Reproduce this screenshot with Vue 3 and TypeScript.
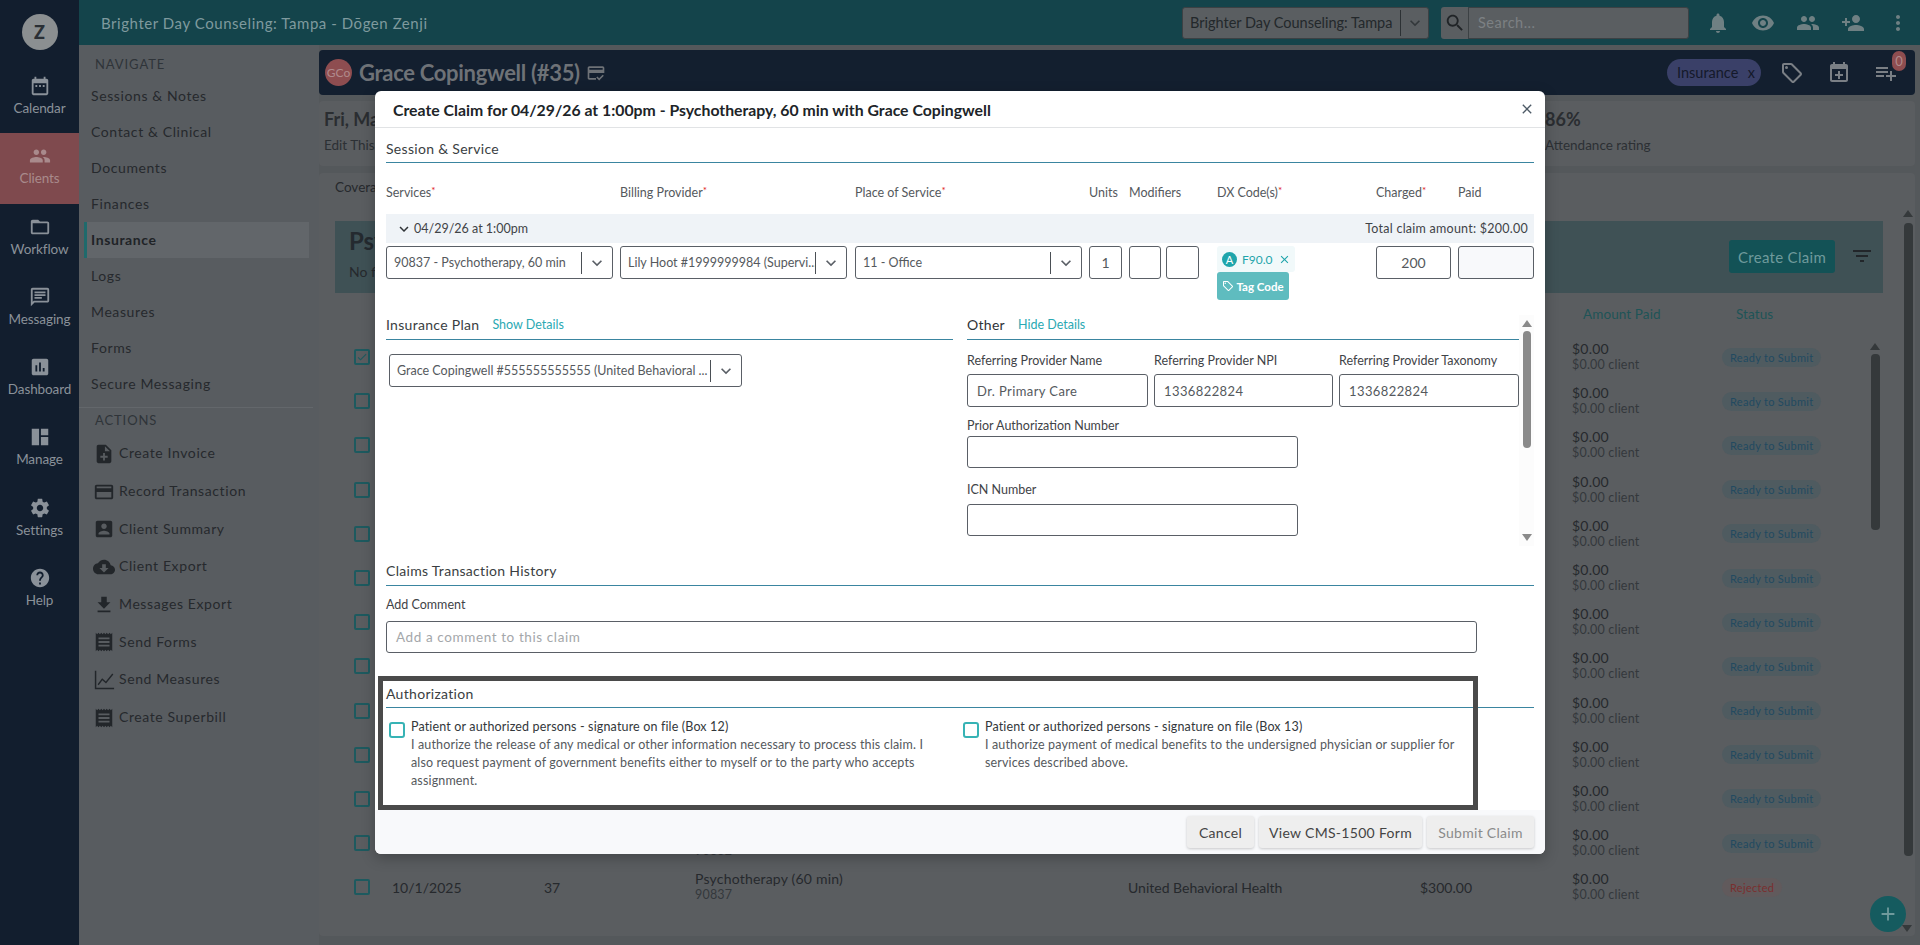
<script setup lang="ts">
const P = {
  calendar: 'M9 11H7v2h2v-2zm4 0h-2v2h2v-2zm4 0h-2v2h2v-2zm2-7h-1V2h-2v2H8V2H6v2H5c-1.11 0-1.99.9-1.99 2L3 20c0 1.1.89 2 2 2h14c1.1 0 2-.9 2-2V6c0-1.1-.9-2-2-2zm0 16H5V9h14v11z',
  people: 'M16 11c1.66 0 2.99-1.34 2.99-3S17.66 5 16 5c-1.66 0-3 1.34-3 3s1.34 3 3 3zm-8 0c1.66 0 2.99-1.34 2.99-3S9.66 5 8 5C6.34 5 5 6.34 5 8s1.34 3 3 3zm0 2c-2.33 0-7 1.17-7 3.5V19h14v-2.5c0-2.33-4.67-3.5-7-3.5zm8 0c-.29 0-.62.02-.97.05 1.16.84 1.97 1.97 1.97 3.45V19h6v-2.5c0-2.33-4.67-3.5-7-3.5z',
  folder: 'M20 6h-8l-2-2H4c-1.1 0-1.99.9-1.99 2L2 18c0 1.1.9 2 2 2h16c1.1 0 2-.9 2-2V8c0-1.1-.9-2-2-2zm0 12H4V8h16v10z',
  chat: 'M20 2H4c-1.1 0-1.99.9-1.99 2L2 22l4-4h14c1.1 0 2-.9 2-2V4c0-1.1-.9-2-2-2zm0 14H5.17L4 17.17V4h16v12zM6 12h8v2H6zm0-3h12v2H6zm0-3h12v2H6z',
  chart: 'M19 3H5c-1.1 0-2 .9-2 2v14c0 1.1.9 2 2 2h14c1.1 0 2-.9 2-2V5c0-1.1-.9-2-2-2zM9 17H7v-7h2v7zm4 0h-2V7h2v10zm4 0h-2v-4h2v4z',
  manage: 'M3 3h8v18H3zM13 3h8v7h-8zM13 12h8v9h-8z',
  gear: 'M19.43 12.98c.04-.32.07-.64.07-.98s-.03-.66-.07-.98l2.11-1.65c.19-.15.24-.42.12-.64l-2-3.46c-.12-.22-.39-.3-.61-.22l-2.49 1c-.52-.4-1.08-.73-1.69-.98l-.38-2.65C14.46 2.18 14.25 2 14 2h-4c-.25 0-.46.18-.49.42l-.38 2.65c-.61.25-1.17.59-1.69.98l-2.49-1c-.23-.09-.49 0-.61.22l-2 3.46c-.13.22-.07.49.12.64l2.11 1.65c-.04.32-.07.65-.07.98s.03.66.07.98l-2.11 1.65c-.19.15-.24.42-.12.64l2 3.46c.12.22.39.3.61.22l2.49-1c.52.4 1.08.73 1.69.98l.38 2.65c.03.24.24.42.49.42h4c.25 0 .46-.18.49-.42l.38-2.65c.61-.25 1.17-.59 1.69-.98l2.49 1c.23.09.49 0 .61-.22l2-3.46c.12-.22.07-.49-.12-.64l-2.11-1.65zM12 15.5c-1.93 0-3.5-1.57-3.5-3.5s1.57-3.5 3.5-3.5 3.5 1.57 3.5 3.5-1.57 3.5-3.5 3.5z',
  help: 'M12 2C6.48 2 2 6.48 2 12s4.48 10 10 10 10-4.48 10-10S17.52 2 12 2zm1 17h-2v-2h2v2zm2.07-7.75l-.9.92C13.45 12.9 13 13.5 13 15h-2v-.5c0-1.1.45-2.1 1.17-2.83l1.24-1.26c.37-.36.59-.86.59-1.41 0-1.1-.9-2-2-2s-2 .9-2 2H8c0-2.21 1.79-4 4-4s4 1.79 4 4c0 .88-.36 1.68-.93 2.25z',
  noteAdd: 'M14 2H6c-1.1 0-1.99.9-1.99 2L4 20c0 1.1.89 2 1.99 2H18c1.1 0 2-.9 2-2V8l-6-6zm2 14h-3v3h-2v-3H8v-2h3v-3h2v3h3v2zm-3-7V3.5L18.5 9H13z',
  card: 'M20 4H4c-1.11 0-1.99.89-1.99 2L2 18c0 1.11.89 2 2 2h16c1.11 0 2-.89 2-2V6c0-1.11-.89-2-2-2zm0 14H4v-6h16v6zm0-10H4V6h16v2z',
  accountBox: 'M3 5v14c0 1.1.89 2 2 2h14c1.1 0 2-.9 2-2V5c0-1.1-.9-2-2-2H5c-1.11 0-2 .9-2 2zm12 4c0 1.66-1.34 3-3 3s-3-1.34-3-3 1.34-3 3-3 3 1.34 3 3zm-9 8c0-2 4-3.1 6-3.1s6 1.1 6 3.1v1H6v-1z',
  cloud: 'M19.35 10.04C18.67 6.59 15.64 4 12 4 9.11 4 6.6 5.64 5.35 8.04 2.34 8.36 0 10.91 0 14c0 3.31 2.69 6 6 6h13c2.76 0 5-2.24 5-5 0-2.64-2.05-4.78-4.65-4.96zM17 13l-5 5-5-5h3V9h4v4h3z',
  getApp: 'M19 9h-4V3H9v6H5l7 7 7-7zM5 18v2h14v-2H5z',
  receipt: 'M18 17H6v-2h12v2zm0-4H6v-2h12v2zm0-4H6V7h12v2zM3 22l1.5-1.5L6 22l1.5-1.5L9 22l1.5-1.5L12 22l1.5-1.5L15 22l1.5-1.5L18 22l1.5-1.5L21 22V2l-1.5 1.5L18 2l-1.5 1.5L15 2l-1.5 1.5L12 2l-1.5 1.5L9 2 7.5 3.5 6 2 4.5 3.5 3 2v20z',
  measures: 'M2 2h1.6v18.4H23V22H2zM5 16.6l5-6.4 4 3.4 7-8.6 1.2 1-8 9.8-4-3.4-4 5.2z',
  bell: 'M12 22c1.1 0 2-.9 2-2h-4c0 1.1.89 2 2 2zm6-6v-5c0-3.07-1.64-5.64-4.5-6.32V4c0-.83-.67-1.5-1.5-1.5s-1.5.67-1.5 1.5v.68C7.63 5.36 6 7.92 6 11v5l-2 2v1h16v-1l-2-2z',
  eye: 'M12 4.5C7 4.5 2.73 7.61 1 12c1.73 4.39 6 7.5 11 7.5s9.27-3.11 11-7.5c-1.73-4.39-6-7.5-11-7.5zM12 17c-2.76 0-5-2.24-5-5s2.24-5 5-5 5 2.24 5 5-2.24 5-5 5zm0-8c-1.66 0-3 1.34-3 3s1.34 3 3 3 3-1.34 3-3-1.34-3-3-3z',
  personAdd: 'M15 12c2.21 0 4-1.79 4-4s-1.79-4-4-4-4 1.79-4 4 1.79 4 4 4zm-9-2V7H4v3H1v2h3v3h2v-3h3v-2H6zm9 4c-2.67 0-8 1.34-8 4v2h16v-2c0-2.66-5.33-4-8-4z',
  dots: 'M12 8c1.1 0 2-.9 2-2s-.9-2-2-2-2 .9-2 2 .9 2 2 2zm0 2c-1.1 0-2 .9-2 2s.9 2 2 2 2-.9 2-2-.9-2-2-2zm0 6c-1.1 0-2 .9-2 2s.9 2 2 2 2-.9 2-2-.9-2-2-2z',
  search: 'M15.5 14h-.79l-.28-.27C15.41 12.59 16 11.11 16 9.5 16 5.91 13.09 3 9.5 3S3 5.91 3 9.5 5.91 16 9.5 16c1.61 0 3.09-.59 4.23-1.57l.27.28v.79l5 4.99L20.49 19l-4.99-5zm-6 0C7.01 14 5 11.99 5 9.5S7.01 5 9.5 5 14 7.01 14 9.5 11.99 14 9.5 14z',
  calPlus: 'M19 3h-1V1h-2v2H8V1H6v2H5c-1.11 0-1.99.9-1.99 2L3 19c0 1.1.89 2 2 2h14c1.1 0 2-.9 2-2V5c0-1.1-.9-2-2-2zm0 16H5V8h14v11zm-8-9h2v3h3v2h-3v3h-2v-3H8v-2h3v-3z',
  playlist: 'M14 10H2v2h12v-2zm0-4H2v2h12V6zm4 8v-4h-2v4h-4v2h4v4h2v-4h4v-2h-4zM2 16h8v-2H2v2z',
  filter: 'M10 18h4v-2h-4v2zM3 6v2h18V6H3zm3 7h12v-2H6v2z',
  plus: 'M19 13h-6v6h-2v-6H5v-2h6V5h2v6h6v2z',
  close: 'M19 6.41L17.59 5 12 10.59 6.41 5 5 6.41 10.59 12 5 17.59 6.41 19 12 13.41 17.59 19 19 17.59 13.41 12z',
  chevron: 'M7.41 8.59L12 13.17l4.59-4.58L18 10l-6 6-6-6z',
  check: 'M9 16.2L4.8 12l-1.4 1.4L9 19 21 7l-1.4-1.4z',
  tag: 'M21.41 11.58l-9-9C12.05 2.22 11.55 2 11 2H4c-1.1 0-2 .9-2 2v7c0 .55.22 1.05.59 1.42l9 9c.36.36.86.58 1.41.58s1.05-.22 1.41-.59l7-7c.37-.36.59-.86.59-1.41s-.23-1.06-.59-1.42zM13 20l-9-9V4h7l9 9-7 7zM6.5 5A1.5 1.5 0 1 0 6.5 8 1.5 1.5 0 0 0 6.5 5z',
  cardCheck: 'M20 4H4c-1.1 0-2 .9-2 2v12c0 1.1.9 2 2 2h8v-2H4v-6h18V6c0-1.1-.9-2-2-2zm0 4H4V6h16v2zm-4.2 13l-3.5-3.5 1.4-1.4 2.1 2.1 4.2-4.2 1.4 1.4z'
}

const rail = [
  { label: 'Calendar', icon: P.calendar },
  { label: 'Clients', icon: P.people, active: true },
  { label: 'Workflow', icon: P.folder },
  { label: 'Messaging', icon: P.chat },
  { label: 'Dashboard', icon: P.chart },
  { label: 'Manage', icon: P.manage },
  { label: 'Settings', icon: P.gear },
  { label: 'Help', icon: P.help }
]
const navItems = ['Sessions & Notes', 'Contact & Clinical', 'Documents', 'Finances', 'Insurance', 'Logs', 'Measures', 'Forms', 'Secure Messaging']
const actions = [
  { label: 'Create Invoice', icon: P.noteAdd },
  { label: 'Record Transaction', icon: P.card },
  { label: 'Client Summary', icon: P.accountBox },
  { label: 'Client Export', icon: P.cloud },
  { label: 'Messages Export', icon: P.getApp },
  { label: 'Send Forms', icon: P.receipt },
  { label: 'Send Measures', icon: P.measures },
  { label: 'Create Superbill', icon: P.receipt }
]
const topIcons = [P.bell, P.eye, P.people, P.personAdd, P.dots]
const rows = Array.from({ length: 13 }, (_, i) => ({
  checked: i === 0,
  full: i === 12,
  peek: i >= 11,
  date: '10/1/2025',
  id: '37',
  service: i === 11 ? 'Psychotherapy (45 min)' : 'Psychotherapy (60 min)',
  code: i === 11 ? '90832' : '90837',
  charged: '$300.00',
  rejected: i === 12
}))
const selects = ['90837 - Psychotherapy, 60 min', 'Lily Hoot #1999999984 (Supervi...', '11 - Office']
</script>

<template>
  <div class="app">
    <aside class="rail">
      <div class="rail-top"><span class="avatar">Z</span></div>
      <a v-for="r in rail" :key="r.label" class="rail-item" :class="{ active: r.active }">
        <svg viewBox="0 0 24 24" class="rail-icon"><path :d="r.icon" /></svg>
        <span>{{ r.label }}</span>
      </a>
    </aside>

    <div class="main">
      <header class="topbar">
        <div class="brand">Brighter Day Counseling: Tampa - Dōgen Zenji</div>
        <div class="loc">
          <span class="loc-text">Brighter Day Counseling: Tampa</span>
          <i class="loc-sep"></i>
          <svg viewBox="0 0 24 24" class="loc-chev"><path :d="P.chevron" /></svg>
        </div>
        <div class="search-btn"><svg viewBox="0 0 24 24"><path :d="P.search" /></svg></div>
        <div class="search-input">Search...</div>
        <div class="top-icons">
          <svg v-for="(ic, i) in topIcons" :key="i" viewBox="0 0 24 24"><path :d="ic" /></svg>
        </div>
      </header>

      <div class="below">
        <nav class="side">
          <div class="side-title">NAVIGATE</div>
          <a v-for="n in navItems" :key="n" class="side-link" :class="{ on: n === 'Insurance' }">{{ n }}</a>
          <div class="side-title actions-title">ACTIONS</div>
          <a v-for="a in actions" :key="a.label" class="side-action">
            <svg viewBox="0 0 24 24"><path :d="a.icon" /></svg>
            <span>{{ a.label }}</span>
          </a>
        </nav>

        <section class="content">
          <div class="patient">
            <span class="p-avatar">GCo</span>
            <span class="p-name">Grace Copingwell (#35)</span>
            <svg viewBox="0 0 24 24" class="p-card"><path :d="P.cardCheck" /></svg>
            <span class="grow"></span>
            <span class="pill">Insurance <b>x</b></span>
            <svg viewBox="0 0 24 24" class="p-ic"><path :d="P.tag" /></svg>
            <svg viewBox="0 0 24 24" class="p-ic"><path :d="P.calPlus" /></svg>
            <span class="p-last">
              <svg viewBox="0 0 24 24" class="p-ic"><path :d="P.playlist" /></svg>
              <em class="badge">0</em>
            </span>
          </div>

          <div class="info">
            <div class="info-col">
              <strong>Fri, Mar 6</strong>
              <span>Edit This Session</span>
            </div>
            <div class="info-col right">
              <strong>86%</strong>
              <span>Attendance rating</span>
            </div>
          </div>

          <div class="panel">
            <div class="tabs">Coverage</div>
            <div class="banner">
              <div>
                <div class="banner-title">Psychotherapy</div>
                <div class="banner-sub">No filters applied</div>
              </div>
              <span class="grow"></span>
              <span class="cc">Create Claim</span>
              <svg viewBox="0 0 24 24" class="filter"><path :d="P.filter" /></svg>
            </div>
            <div class="thead">
              <span class="th-paid">Amount Paid</span>
              <span class="th-status">Status</span>
            </div>
            <div class="tbody">
              <div v-for="(r, i) in rows" :key="i" class="row">
                <span class="cb"><svg v-if="r.checked" viewBox="0 0 24 24"><path :d="P.check" /></svg></span>
                <span>{{ r.full ? r.date : '' }}</span>
                <span>{{ r.full ? r.id : '' }}</span>
                <span class="two"><template v-if="r.peek"><span>{{ r.service }}</span><small>{{ r.code }}</small></template></span>
                <span>{{ r.full ? 'United Behavioral Health' : '' }}</span>
                <span>{{ r.full ? r.charged : '' }}</span>
                <span class="two"><span>$0.00</span><small>$0.00 client</small></span>
                <span><em class="status" :class="{ rej: r.rejected }">{{ r.rejected ? 'Rejected' : 'Ready to Submit' }}</em></span>
              </div>
            </div>
            <div class="inner-bar">
              <i class="up dim"></i>
              <i class="thumb"></i>
            </div>
            <div class="outer-bar">
              <i class="up dim"></i>
              <i class="thumb"></i>
            </div>
            <div class="fab"><svg viewBox="0 0 24 24"><path :d="P.plus" /></svg></div>
            <i class="fab-arrow"></i>
          </div>
        </section>
      </div>
    </div>

    <div class="modal">
      <div class="m-head">
        <h2>Create Claim for 04/29/26 at 1:00pm - Psychotherapy, 60 min with Grace Copingwell</h2>
        <svg viewBox="0 0 24 24"><path :d="P.close" /></svg>
      </div>

      <div class="m-body">
        <div class="sec sec-session">Session &amp; Service</div>
        <div class="grid labels">
          <label>Services<sup>*</sup></label>
          <label>Billing Provider<sup>*</sup></label>
          <label>Place of Service<sup>*</sup></label>
          <label>Units</label>
          <label class="span2">Modifiers</label>
          <label>DX Code(s)<sup>*</sup></label>
          <label>Charged<sup>*</sup></label>
          <label>Paid</label>
        </div>
        <div class="dateline">
          <svg viewBox="0 0 24 24"><path :d="P.chevron" /></svg>
          <span>04/29/26 at 1:00pm</span>
          <span class="grow"></span>
          <span class="total">Total claim amount: $200.00</span>
        </div>
        <div class="grid inputs">
          <div v-for="s in selects" :key="s" class="sel sel-w">
            <span class="sel-val">{{ s }}</span><i></i>
            <svg viewBox="0 0 24 24"><path :d="P.chevron" /></svg>
          </div>
          <div class="box w33 center">1</div>
          <div class="box w32"></div>
          <div class="box w33"></div>
          <div class="dx">
            <div class="chip"><b>A</b><span>F90.0</span><svg viewBox="0 0 24 24"><path :d="P.close" /></svg></div>
            <div class="tagcode"><svg viewBox="0 0 24 24"><path :d="P.tag" /></svg>Tag Code</div>
          </div>
          <div class="box w75 center">200</div>
          <div class="box w76 tint"></div>
        </div>

        <div class="split">
          <div class="col-left">
            <div class="sec sec-small"><span>Insurance Plan</span><a>Show Details</a></div>
            <div class="sel plan">
              <span class="sel-val">Grace Copingwell #555555555555 (United Behavioral ...</span><i></i>
              <svg viewBox="0 0 24 24"><path :d="P.chevron" /></svg>
            </div>
          </div>
          <div class="col-right">
            <div class="other">
              <div class="sec sec-small"><span class="dark">Other</span><a>Hide Details</a></div>
              <div class="three">
                <div><label class="fl l1">Referring Provider Name</label><div class="box fill pad">Dr. Primary Care</div></div>
                <div><label class="fl l1">Referring Provider NPI</label><div class="box fill pad">1336822824</div></div>
                <div><label class="fl l1">Referring Provider Taxonomy</label><div class="box fill pad">1336822824</div></div>
              </div>
              <label class="fl l2">Prior Authorization Number</label>
              <div class="box wide"></div>
              <label class="fl l3">ICN Number</label>
              <div class="box wide"></div>
            </div>
            <div class="track">
              <i class="up"></i>
              <i class="thumb"></i>
              <span class="grow"></span>
              <i class="down"></i>
            </div>
          </div>
        </div>

        <div class="sec sec-claims">Claims Transaction History</div>
        <label class="fl add">Add Comment</label>
        <div class="box comment">Add a comment to this claim</div>

        <div class="sec sec-auth">Authorization</div>
        <div class="auth">
          <div class="auth-col">
            <span class="mcb"></span>
            <div class="auth-text">
              <div class="a-title">Patient or authorized persons - signature on file (Box 12)</div>
              <div>I authorize the release of any medical or other information necessary to process this claim. I also request payment of government benefits either to myself or to the party who accepts assignment.</div>
            </div>
          </div>
          <div class="auth-col second">
            <span class="mcb"></span>
            <div class="auth-text">
              <div class="a-title">Patient or authorized persons - signature on file (Box 13)</div>
              <div>I authorize payment of medical benefits to the undersigned physician or supplier for services described above.</div>
            </div>
          </div>
        </div>
      </div>

      <div class="m-foot">
        <button class="b-cancel">Cancel</button>
        <button class="b-view">View CMS-1500 Form</button>
        <button class="b-submit">Submit Claim</button>
      </div>

      <div class="annot"></div>
    </div>
  </div>
</template>

<style>
html, body { margin: 0; height: 100%; overflow: hidden; }
</style>

<style scoped>
.app { display: flex; height: 945px; width: 1920px; overflow: hidden; position: relative; font-family: Lato, "Open Sans", sans-serif; font-size: 14px; color: #26292d; background: #54585b; }
.grow { flex: 1; }
svg { display: block; fill: currentColor; flex: none; }
i, em { font-style: normal; display: block; }

.rail { width: 79px; flex: none; background: #121e2e; color: #8a9199; display: flex; flex-direction: column; }
.rail-top { height: 63px; display: flex; justify-content: center; align-items: flex-start; padding-top: 14px; box-sizing: border-box; }
.avatar { width: 36px; height: 36px; border-radius: 50%; background: #8b8f91; color: #2a2f35; font-weight: 900; font-size: 18px; display: flex; align-items: center; justify-content: center; }
.rail-item { height: 70.3px; display: flex; flex-direction: column; align-items: center; padding-top: 12px; box-sizing: border-box; font-size: 13.5px; letter-spacing: -.1px; line-height: 18px; }
.rail-icon { width: 22px; height: 22px; margin-bottom: 2px; }
.rail-item.active { background: #7f4a4e; color: #a98a8c; }

.main { flex: 1; display: flex; flex-direction: column; min-width: 0; }
.topbar { height: 45px; background: #14444b; display: flex; align-items: center; flex: none; box-sizing: border-box; }
.brand { color: #7f9a9e; font-size: 15px; letter-spacing: .55px; margin-left: 22px; width: 1081px; flex: none; }
.loc { width: 247px; height: 32px; box-sizing: border-box; background: #5a5e61; border: 1px solid #3c4144; border-radius: 3px; display: flex; align-items: center; padding-left: 7px; color: #23282b; flex: none; }
.loc-text { font-size: 14.5px; width: 210px; white-space: nowrap; }
.loc-sep { width: 1px; height: 26px; background: #2c3134; }
.loc-chev { width: 20px; height: 20px; margin-left: 4px; color: #33383b; }
.search-btn { margin-left: 12px; width: 27px; height: 32px; background: #5a5e61; border-radius: 3px 0 0 3px; display: flex; align-items: center; justify-content: center; color: #202427; flex: none; }
.search-btn svg { width: 22px; height: 22px; }
.search-input { width: 221px; height: 32px; box-sizing: border-box; background: #5a5e61; border: 1px solid #3c4144; border-radius: 0 3px 3px 0; color: #7d8184; font-size: 14.5px; letter-spacing: .5px; display: flex; align-items: center; padding-left: 9px; flex: none; }
.top-icons { display: flex; gap: 21px; margin-left: 17px; color: #6f8083; }
.top-icons svg { width: 24px; height: 24px; }

.below { flex: 1; display: flex; min-height: 0; }
.side { width: 240px; flex: none; background: #585c60; box-sizing: border-box; display: flex; flex-direction: column; }
.side-title { font-size: 13px; letter-spacing: .9px; color: #2f3439; padding: 11px 0 0 16px; line-height: 16px; height: 33px; box-sizing: border-box; flex: none; }
.side-link { height: 36px; line-height: 36px; padding-left: 7px; margin-left: 5px; width: 225px; box-sizing: border-box; flex: none; letter-spacing: .6px; font-size: 14px; color: #26292d; }
.side-link.on { background: #62666a; border-left: 3px solid #1f6a6c; padding-left: 4px; font-weight: 700; color: #1f2327; }
.actions-title { margin-top: 5px; border-top: 1px solid #63676b; width: 234px; padding-top: 4px; height: 28px; }
.side-action { height: 37.7px; display: flex; align-items: center; padding-left: 14px; color: #26292d; flex: none; letter-spacing: .6px; }
.side-action svg { width: 22px; height: 22px; margin-right: 4px; color: #22262a; }
.side-action span { margin-bottom: 2px; }

.content { flex: 1; min-width: 0; background: #54585b; padding: 5px 5px 9px 0; box-sizing: border-box; display: flex; flex-direction: column; }
.patient { height: 45px; flex: none; background: #131f2f; border-radius: 4px; display: flex; align-items: center; padding-left: 6px; padding-right: 17px; }
.p-avatar { width: 27px; height: 27px; border-radius: 50%; background: #8e4d50; color: #b08a8c; font-size: 12px; display: flex; align-items: center; justify-content: center; flex: none; }
.p-name { color: #6e7277; font-size: 22px; letter-spacing: -.3px; font-weight: 700; margin-left: 7px; white-space: nowrap; }
.p-card { width: 20px; height: 20px; color: #6e7277; margin-left: 6px; }
.pill { width: 94px; height: 27px; box-sizing: border-box; border-radius: 14px; background: #3a4068; color: #14192a; font-size: 14.5px; display: flex; align-items: center; justify-content: space-between; padding: 0 6px 0 10px; }
.pill b { font-weight: 400; }
.p-ic { width: 24px; height: 24px; color: #7a7f85; margin-left: 19px; }
.p-ic + .p-ic { margin-left: 23px; }
.p-last { position: relative; display: block; margin-left: 4px; }
.badge { position: absolute; top: -10px; right: -8px; width: 14px; height: 20px; border-radius: 8px; background: #8e4d50; color: #b08a8c; font-size: 13px; text-align: center; line-height: 20px; }

.info { height: 65px; flex: none; margin-top: 6px; background: #5a5d60; border-radius: 4px; display: flex; }
.info-col { display: flex; flex-direction: column; padding: 7px 0 0 5px; }
.info-col strong { font-size: 18px; line-height: 22px; color: #2a2d31; }
.info-col span { margin-top: 7px; font-size: 13.5px; color: #2c3034; }
.info-col.right { margin-left: auto; width: 370px; padding-left: 0; }

.panel { position: relative; flex: 1; min-height: 0; margin-top: 7px; background: #5a5d60; border-radius: 4px; padding: 0 32px 0 16px; overflow: hidden; }
.tabs { height: 48px; padding-top: 6px; box-sizing: border-box; font-size: 13.5px; }
.banner { height: 72px; background: #3f5155; display: flex; align-items: center; padding-left: 14px; padding-right: 9px; }
.banner-title { font-size: 24px; font-weight: 700; color: #242a2f; line-height: 30px; margin-top: -6px; }
.banner-sub { font-size: 14px; line-height: 20px; margin-top: 6px; }
.cc { width: 106px; height: 33px; border-radius: 3px; background: #135256; color: #6f9a9c; font-size: 15px; letter-spacing: .3px; display: flex; align-items: center; justify-content: center; margin-top: -1px; }
.filter { width: 24px; height: 24px; color: #22262a; margin-left: 15px; margin-top: -2px; }
.thead { height: 42px; position: relative; color: #1e5457; font-size: 13.5px; letter-spacing: .1px; }
.th-paid { position: absolute; left: 1248px; top: 13px; }
.th-status { position: absolute; left: 1401px; top: 13px; }
.tbody { height: 585px; overflow: hidden; }
.row { height: 44.2px; display: grid; grid-template-columns: 38px 152px 151px 433px 292px 152px 150px 1fr; align-items: center; padding-left: 19px; font-size: 14px; }
.two { display: flex; flex-direction: column; line-height: 16px; letter-spacing: .2px; }
.two small { font-size: 12.5px; color: #34383c; }
.cb { width: 16px; height: 16px; box-sizing: border-box; border: 2px solid #1d5a5f; border-radius: 2px; color: #1d5a5f; }
.cb svg { width: 12px; height: 12px; }
.status { display: inline-block; height: 19px; line-height: 19px; border-radius: 10px; padding: 0 8px; background: #4f5b60; color: #224a60; font-size: 11px; letter-spacing: .3px; }
.status.rej { background: #615a5c; color: #7a2f2f; }

.inner-bar { position: absolute; left: 1549px; top: 170px; width: 14px; display: flex; flex-direction: column; align-items: center; }
.inner-bar .thumb { width: 9px; height: 176px; background: #35393b; border-radius: 4px; margin-top: 4px; }
.outer-bar { position: absolute; left: 1582px; top: 37px; width: 14px; display: flex; flex-direction: column; align-items: center; }
.outer-bar .thumb { width: 9px; height: 633px; background: #35393b; border-radius: 4px; margin-top: 6px; }
.up { width: 0; height: 0; border: 5px solid transparent; border-top: 0; border-bottom: 7px solid #8a8a8a; }
.up.dim { border-bottom-color: #35393b; }
.down { width: 0; height: 0; border: 5px solid transparent; border-bottom: 0; border-top: 7px solid #8a8a8a; }
.fab { position: absolute; left: 1551px; top: 723px; width: 36px; height: 36px; border-radius: 50%; background: #155b5f; color: #6f9a9c; display: flex; align-items: center; justify-content: center; }
.fab svg { width: 22px; height: 22px; }
.fab-arrow { position: absolute; left: 1583px; top: 752px; width: 0; height: 0; border: 5px solid transparent; border-bottom: 0; border-top: 7px solid #35393b; }

.modal { position: absolute; left: 375px; top: 91px; width: 1170px; height: 763px; background: #fff; border-radius: 6px; display: flex; flex-direction: column; box-shadow: 0 4px 14px rgba(0,0,0,.25); font-size: 13px; color: #3f4347; }
.m-head { height: 37px; box-sizing: border-box; flex: none; border-bottom: 1px solid #e1e3e5; display: flex; align-items: center; justify-content: space-between; padding: 0 10px 0 18px; }
.m-head h2 { margin: 0; font-size: 15.8px; font-weight: 700; color: #202428; white-space: nowrap; }
.m-head svg { width: 16px; height: 16px; color: #4d5a66; }
.m-body { flex: 1; min-height: 0; padding: 0 11px; position: relative; }
.sec { display: flex; align-items: center; border-bottom: 1px solid #3a85a0; box-sizing: border-box; font-size: 14px; color: #3a3e42; letter-spacing: .3px; }
.sec-session { height: 35px; padding-top: 6px; }
.grid { display: grid; grid-template-columns: 234px 235px 234px 40px 37px 51px 159px 82px 76px; }
.labels { height: 51px; padding-top: 7px; box-sizing: border-box; align-items: center; font-size: 12.5px; color: #55595d; }
.labels .span2 { grid-column: span 2; }
sup { color: #e02020; font-size: 10px; line-height: 0; vertical-align: 3px; }
.dateline { height: 29px; background: #eff3f7; display: flex; align-items: center; padding: 0 6px 0 9px; font-size: 12.5px; color: #3f4347; }
.dateline svg { width: 18px; height: 18px; margin-right: 1px; color: #2f3337; }
.total { letter-spacing: .25px; }
.inputs { margin-top: 3px; height: 54px; align-items: start; }
.sel { height: 33px; box-sizing: border-box; border: 1px solid #5a5f66; border-radius: 3px; display: flex; align-items: center; padding-left: 7px; background: #fff; font-size: 12.5px; color: #55595d; }
.sel-w { width: 227px; }
.sel-val { flex: 1; white-space: nowrap; overflow: hidden; min-width: 0; }
.sel i { width: 1px; height: 22px; background: #4a4f55; flex: none; }
.sel svg { width: 20px; height: 20px; margin: 0 5px; color: #5a5f66; }
.box { height: 33px; box-sizing: border-box; border: 1px solid #5a5f66; border-radius: 3px; background: #fff; display: flex; align-items: center; color: #55595d; }
.w33 { width: 33px; }
.w32 { width: 32px; }
.w75 { width: 75px; }
.w76 { width: 76px; }
.center { justify-content: center; font-size: 14px; }
.tint { background: #f8f9fb; }
.dx { display: flex; flex-direction: column; align-items: flex-start; }
.chip { width: 78px; height: 26px; box-sizing: border-box; background: #f1f9fa; border-radius: 3px; display: flex; align-items: center; padding-left: 5px; color: #1fa5ab; font-size: 12px; }
.chip b { width: 15px; height: 15px; border-radius: 50%; background: #1fa5ab; color: #fff; font-weight: 400; font-size: 11px; display: flex; align-items: center; justify-content: center; margin-right: 5px; }
.chip svg { width: 13px; height: 13px; margin-left: 5px; }
.tagcode { width: 72px; height: 28px; background: #5fbcbf; border-radius: 3px; color: #fff; font-size: 11.5px; font-weight: 700; display: flex; align-items: center; justify-content: center; gap: 2px; }
.tagcode svg { width: 12px; height: 12px; }

.split { display: flex; margin-top: 15px; height: 231px; }
.col-left { width: 567px; flex: none; }
.sec-small { height: 25px; padding-bottom: 5px; }
.sec-small a { color: #2aa9b3; font-size: 12.5px; margin-left: 13px; letter-spacing: 0; }
.dark { color: #2f3337; }
.plan { width: 353px; margin: 14px 0 0 3px; }
.col-right { margin-left: 14px; flex: 1; display: flex; min-width: 0; }
.other { flex: 1; min-width: 0; }
.three { display: grid; grid-template-columns: 181px 179px 180px; column-gap: 6px; }
.fl { display: block; font-size: 12.5px; color: #3f4347; line-height: 16px; box-sizing: border-box; }
.l1 { height: 34px; padding-top: 13px; white-space: nowrap; }
.l2 { height: 29px; padding-top: 11px; }
.l3 { height: 36px; padding-top: 14px; }
.fill { width: 100%; }
.pad { padding-left: 9px; font-size: 13px; letter-spacing: .4px; }
.wide { width: 331px; height: 32px; }
.track { width: 15px; flex: none; background: #fcfcfc; display: flex; flex-direction: column; align-items: center; padding-top: 5px; padding-bottom: 5px; box-sizing: border-box; }
.track .thumb { width: 8px; height: 117px; background: #8a8a8a; border-radius: 4px; margin-top: 4px; }
.sec-claims { height: 40px; padding-top: 9px; }
.add { height: 35px; padding-top: 11px; }
.comment { width: 1091px; height: 32px; padding-left: 9px; color: #a4a7aa; letter-spacing: .6px; font-size: 13.5px; }
.sec-auth { height: 55px; padding-top: 26px; }
.auth { display: flex; padding-top: 10px; font-size: 12.5px; line-height: 18px; color: #55595d; letter-spacing: .15px; }
.auth-col { width: 577px; flex: none; display: flex; padding-left: 3px; box-sizing: border-box; }
.auth-col.second { width: 560px; padding-left: 0; }
.mcb { width: 16px; height: 16px; box-sizing: border-box; border: 2px solid #37b3b5; border-radius: 3px; flex: none; margin: 4px 6px 0 0; }
.auth-text { width: 522px; }
.second .auth-text { width: 490px; }
.a-title { color: #33373b; }

.m-foot { height: 44px; flex: none; background: #f8f9fb; border-radius: 0 0 6px 6px; display: flex; justify-content: flex-end; gap: 5px; padding: 6px 11px 0 0; box-sizing: border-box; }
button { height: 32px; padding: 0; border: 0; border-radius: 3px; background: #eee; color: #444; font-family: inherit; font-size: 14px; letter-spacing: .3px; box-shadow: 0 1px 3px rgba(0,0,0,.2); }
.b-cancel { width: 67px; }
.b-view { width: 163px; }
.b-submit { width: 107px; color: #8a8a8a; }
.annot { position: absolute; left: 3px; top: 585px; width: 1100px; height: 134px; box-sizing: border-box; border: 5px solid #4a4a4a; pointer-events: none; }
</style>
